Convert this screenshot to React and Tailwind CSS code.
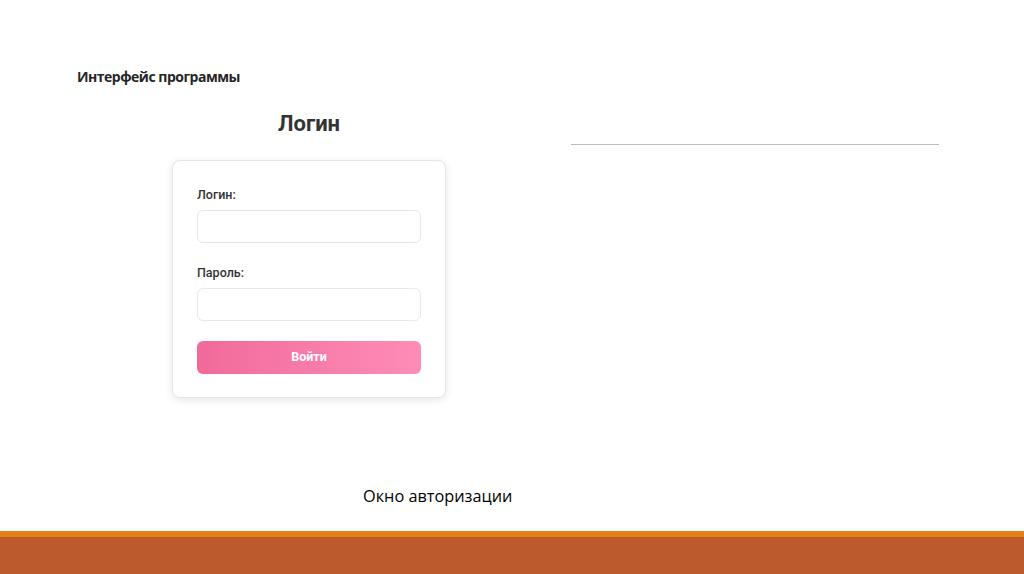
export default function App() {
  return (
    <div className="w-[1024px] h-[574px] flex flex-col bg-white overflow-hidden">
      {/* -- Slide content -- */}
      <div className="flex-1 flex flex-col">
        <h2 className="pt-[69px] pl-[77px] text-[14px] leading-4 font-bold tracking-[-0.5px] text-[#262626] font-['Open_Sans',sans-serif]">
          Интерфейс программы
        </h2>

        <div className="flex pl-[172px]">
          {/* login mockup */}
          <div className="w-[274px] flex flex-col items-center">
            <h1 className="mt-[27px] text-[22px] leading-6 font-bold text-[#333] font-['Roboto',sans-serif]">Логин</h1>
            <div className="mt-[24px] w-full h-[238px] rounded-lg border border-[#e6e6e6] bg-white shadow-[0_2px_8px_rgba(0,0,0,0.1)] px-6 pt-[26px] font-['Roboto',sans-serif]">
              <p className="text-[12.5px] leading-4 font-medium text-[#333]">Логин:</p>
              <div className="mt-[7px] h-[33px] rounded-md border border-[#e8e8e8]"></div>
              <p className="mt-[22px] text-[12.5px] leading-4 font-medium text-[#333]">Пароль:</p>
              <div className="mt-[7px] h-[33px] rounded-md border border-[#e8e8e8]"></div>
              <button className="mt-[20px] w-full h-[33px] rounded-md bg-gradient-to-r from-[#f06a9a] to-[#ff8cb8] text-white text-[12.5px] font-bold">
                Войти
              </button>
            </div>
          </div>

          {/* divider */}
          <div className="ml-[125px] w-[368px] mt-[59px] h-px bg-[#bdbdbd]"></div>
        </div>

        <p className="mt-[88px] pl-[363px] text-[16.3px] leading-5 text-black font-['Open_Sans',sans-serif]">Окно авторизации</p>
      </div>

      {/* -- Bottom bars -- */}
      <div className="h-[6px] bg-[#e2801a]"></div>
      <div className="h-[37px] bg-[#bc5a2e]"></div>
    </div>
  );
}
